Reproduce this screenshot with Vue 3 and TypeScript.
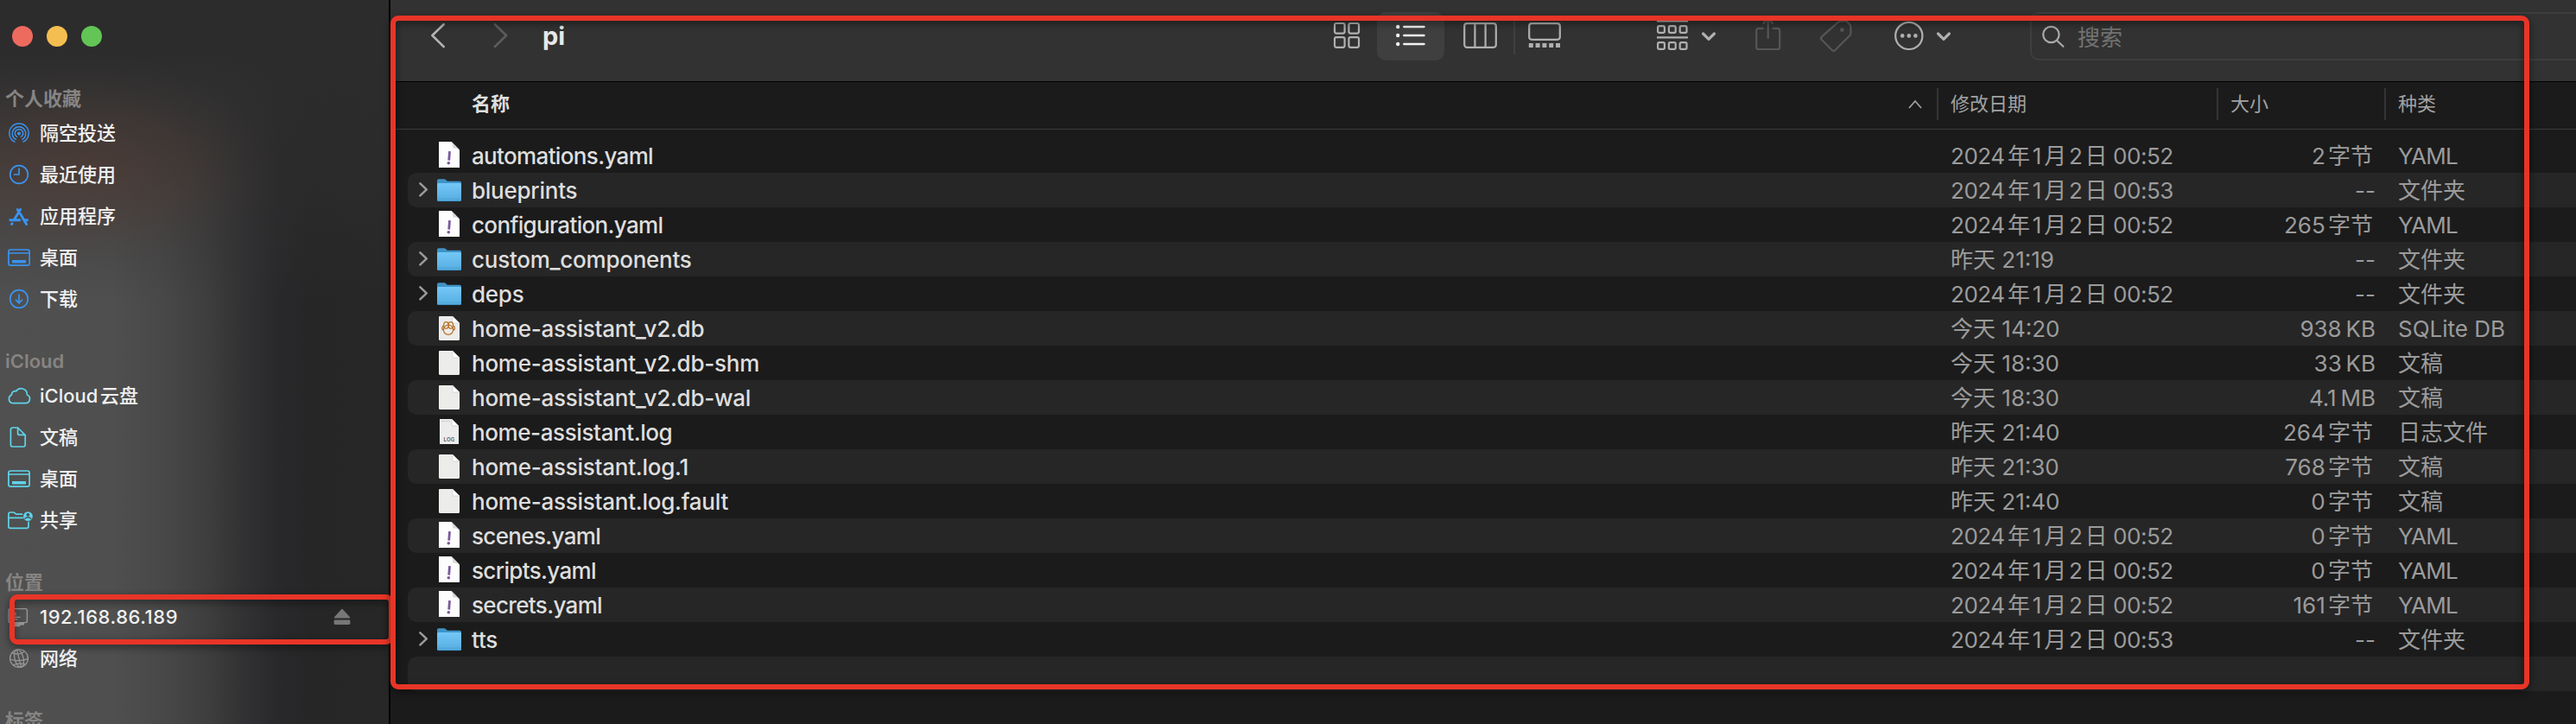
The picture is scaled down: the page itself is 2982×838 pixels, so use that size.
<script setup lang="ts">
type FileIcon = 'yaml' | 'folder' | 'db' | 'doc' | 'log'
type SideIcon = 'airdrop' | 'clock' | 'apps' | 'desktop' | 'download' | 'cloud' | 'document' | 'shared' | 'computer' | 'globe'

interface FileRow {
  name: string
  date: string
  size: string
  kind: string
  icon: FileIcon
}

interface SideItem {
  label: string
  icon: SideIcon
  eject?: boolean
}

interface SideGroup {
  title: string
  tone: 'blue' | 'cyan' | 'gray'
  items: SideItem[]
}

const groups: SideGroup[] = [
  {
    title: '个人收藏',
    tone: 'blue',
    items: [
      { label: '隔空投送', icon: 'airdrop' },
      { label: '最近使用', icon: 'clock' },
      { label: '应用程序', icon: 'apps' },
      { label: '桌面', icon: 'desktop' },
      { label: '下载', icon: 'download' },
    ],
  },
  {
    title: 'iCloud',
    tone: 'cyan',
    items: [
      { label: 'iCloud云盘', icon: 'cloud' },
      { label: '文稿', icon: 'document' },
      { label: '桌面', icon: 'desktop' },
      { label: '共享', icon: 'shared' },
    ],
  },
  {
    title: '位置',
    tone: 'gray',
    items: [
      { label: '192.168.86.189', icon: 'computer', eject: true },
      { label: '网络', icon: 'globe' },
    ],
  },
  { title: '标签', tone: 'gray', items: [] },
]

const files: FileRow[] = [
  { name: 'automations.yaml', date: '2024年1月2日 00:52', size: '2字节', kind: 'YAML', icon: 'yaml' },
  { name: 'blueprints', date: '2024年1月2日 00:53', size: '--', kind: '文件夹', icon: 'folder' },
  { name: 'configuration.yaml', date: '2024年1月2日 00:52', size: '265字节', kind: 'YAML', icon: 'yaml' },
  { name: 'custom_components', date: '昨天 21:19', size: '--', kind: '文件夹', icon: 'folder' },
  { name: 'deps', date: '2024年1月2日 00:52', size: '--', kind: '文件夹', icon: 'folder' },
  { name: 'home-assistant_v2.db', date: '今天 14:20', size: '938 KB', kind: 'SQLite DB', icon: 'db' },
  { name: 'home-assistant_v2.db-shm', date: '今天 18:30', size: '33 KB', kind: '文稿', icon: 'doc' },
  { name: 'home-assistant_v2.db-wal', date: '今天 18:30', size: '4.1 MB', kind: '文稿', icon: 'doc' },
  { name: 'home-assistant.log', date: '昨天 21:40', size: '264字节', kind: '日志文件', icon: 'log' },
  { name: 'home-assistant.log.1', date: '昨天 21:30', size: '768字节', kind: '文稿', icon: 'doc' },
  { name: 'home-assistant.log.fault', date: '昨天 21:40', size: '0字节', kind: '文稿', icon: 'doc' },
  { name: 'scenes.yaml', date: '2024年1月2日 00:52', size: '0字节', kind: 'YAML', icon: 'yaml' },
  { name: 'scripts.yaml', date: '2024年1月2日 00:52', size: '0字节', kind: 'YAML', icon: 'yaml' },
  { name: 'secrets.yaml', date: '2024年1月2日 00:52', size: '161字节', kind: 'YAML', icon: 'yaml' },
  { name: 'tts', date: '2024年1月2日 00:53', size: '--', kind: '文件夹', icon: 'folder' },
]
</script>

<template>
  <div class="window">
    <aside class="sidebar">
      <div class="lights">
        <span class="light red"></span>
        <span class="light yellow"></span>
        <span class="light green"></span>
      </div>
      <section v-for="g in groups" :key="g.title" class="group" :class="g.tone">
        <h2>{{ g.title }}</h2>
        <div v-for="item in g.items" :key="item.label" class="side-item">
          <svg class="side-icon" width="34" height="32" viewBox="0 0 34 32" fill="none" stroke="currentColor" stroke-width="1.7" stroke-linecap="round" stroke-linejoin="round">
            <template v-if="item.icon === 'airdrop'">
              <circle cx="17" cy="16.4" r="2" fill="currentColor" stroke="none" />
              <path stroke-width="1.5" d="M14.6 20.4a4.7 4.7 0 1 1 4.8 0M13.2 23.4a7.8 7.8 0 1 1 7.6 0M12 26.2a11.2 11.2 0 1 1 10 0" />
            </template>
            <template v-else-if="item.icon === 'clock'">
              <circle cx="17" cy="16" r="10.3" />
              <path d="M17 9.2V16H11.6" />
            </template>
            <template v-else-if="item.icon === 'apps'">
              <path stroke-width="2.9" d="M18.6 8.6 11.3 20.6M15.3 8.6l1 1.8M18.6 13.6l7 12M6.8 20.8h11M22.8 20.8h3.8M9 24.8l-.5.8" />
            </template>
            <template v-else-if="item.icon === 'desktop'">
              <rect x="4.9" y="7" width="24.2" height="18.2" rx="2.4" />
              <path stroke-width="1.4" d="M5 11h24" />
              <rect x="9" y="19" width="16" height="3.6" rx=".6" fill="currentColor" stroke="none" />
            </template>
            <template v-else-if="item.icon === 'download'">
              <circle cx="17" cy="16" r="10.3" />
              <path d="M17 11v9.6M13.4 17.2l3.6 3.6 3.6-3.6" />
            </template>
            <template v-else-if="item.icon === 'cloud'">
              <path d="M9.6 24.6h14.6a5 5 0 0 0 2.2-9.6 7 7 0 0 0-12.8-4.2 4.2 4.2 0 0 0-5.2 4.3 5 5 0 0 0 1.2 9.5z" />
            </template>
            <template v-else-if="item.icon === 'document'">
              <path d="M9.6 5h6l8.6 8.6v11.2a2.2 2.2 0 0 1-2.2 2.2H9.6a2.2 2.2 0 0 1-2.2-2.2V7.2A2.2 2.2 0 0 1 9.6 5zM15.6 5.2v6.2a2 2 0 0 0 2 2h6.2" />
            </template>
            <template v-else-if="item.icon === 'shared'">
              <path d="M28 18.4v4.8a2.2 2.2 0 0 1-2.2 2.2H7.1a2.2 2.2 0 0 1-2.2-2.2V9.2A2.2 2.2 0 0 1 7.1 7h3.4c1.8 0 2 2.2 4 2.2h6M5 13.4h16.5" />
              <circle cx="27.4" cy="11.6" r="5.4" fill="currentColor" stroke="none" />
              <circle cx="27.4" cy="9.8" r="1.9" fill="#4f4f4f" stroke="none" />
              <path d="M23.9 14.3c1.4-2 5.6-2 7 0" stroke="#4f4f4f" stroke-width="1.4" />
            </template>
            <template v-else-if="item.icon === 'computer'">
              <rect x="5" y="6.6" width="21.4" height="16" rx="1.8" stroke-width="1.4" />
              <path stroke-width="1.2" d="M13 11v3M12 16.4h6M12 18.8h3" />
              <path d="M9 22.4h14v3.2h-4.4l-.6 1.6H9z" fill="currentColor" stroke="none" />
            </template>
            <template v-else>
              <g stroke-width="1.3">
                <circle cx="17" cy="16" r="10.4" />
                <ellipse cx="17" cy="16" rx="5" ry="10.4" transform="rotate(-14 17 16)" />
                <path d="M14.4 6 19.6 26M6.8 17c5 2.4 14 2.4 20.2-.6M9 9.6c5 2.4 9.8 2 14-1.4M10.4 23.6c4-1.8 10.2-2 14-.8" />
              </g>
            </template>
          </svg>
          <span class="side-label" :class="{ host: item.eject }">{{ item.label }}</span>
          <svg v-if="item.eject" class="eject" width="20" height="20" viewBox="0 0 20 20">
            <path d="M10 .8a1 1 0 0 1 .8.4l8.2 9c.5.6.2 1.4-.6 1.4H1.6c-.8 0-1.1-.8-.6-1.4l8.2-9a1 1 0 0 1 .8-.4z" />
            <rect x=".6" y="13.6" width="18.8" height="5.4" rx="1.4" />
          </svg>
        </div>
      </section>
    </aside>

    <main class="content">
      <header class="toolbar">
        <svg class="back" width="18" height="40" viewBox="0 0 18 40"><path d="M15.6 6.2 2.4 19l13.2 13" /></svg>
        <svg class="forward" width="18" height="40" viewBox="0 0 18 40"><path d="M2.9 6.2 16.1 19 2.9 32" /></svg>
        <h1>pi</h1>
        <svg class="tool" width="32" height="40" viewBox="0 0 32 40">
          <rect x="2" y="5" width="11.6" height="11.6" rx="2" />
          <rect x="18.4" y="5" width="11.6" height="11.6" rx="2" />
          <rect x="2" y="21.2" width="11.6" height="11.6" rx="2" />
          <rect x="18.4" y="21.2" width="11.6" height="11.6" rx="2" />
        </svg>
        <div class="segment">
          <svg width="36" height="40" viewBox="0 0 36 40">
            <g fill="#f2f2f2">
              <circle cx="3.2" cy="9" r="2.2" />
              <circle cx="3.2" cy="19" r="2.2" />
              <circle cx="3.2" cy="29" r="2.2" />
            </g>
            <path d="M10.4 9h23M10.4 19h23M10.4 29h23" stroke="#f2f2f2" stroke-width="2.6" stroke-linecap="round" />
          </svg>
        </div>
        <svg class="tool columns" width="40" height="40" viewBox="0 0 40 40">
          <rect x="1.2" y="5.2" width="36.6" height="27.6" rx="3" />
          <path d="M13.4 5v28M25.6 5v28" />
        </svg>
        <span class="sep"></span>
        <svg class="tool gallery" width="40" height="40" viewBox="0 0 40 40">
          <rect x="2.2" y="5.2" width="35.6" height="18.6" rx="3" />
          <path d="M1.8 30.4h36.6" stroke-width="5" stroke-dasharray="5 2.8" />
        </svg>
        <svg class="tool group-by" width="38" height="40" viewBox="0 0 38 40">
          <path d="M1 2.4h36M1 21.3h36" stroke-width="2.2" />
          <rect x="2.1" y="8.1" width="7.8" height="7.8" rx="1.6" />
          <rect x="14.9" y="8.1" width="7.8" height="7.8" rx="1.6" />
          <rect x="27.7" y="8.1" width="7.8" height="7.8" rx="1.6" />
          <rect x="2.1" y="27.1" width="7.8" height="7.8" rx="1.6" />
          <rect x="14.9" y="27.1" width="7.8" height="7.8" rx="1.6" />
          <rect x="27.7" y="27.1" width="7.8" height="7.8" rx="1.6" />
        </svg>
        <svg class="tool drop" width="18" height="40" viewBox="0 0 18 40"><path d="M2.6 17 9 23.4 15.4 17" /></svg>
        <svg class="tool dim share" width="32" height="40" viewBox="0 0 32 40">
          <path d="M10 10.8H4.8a2.6 2.6 0 0 0-2.6 2.6v19a2.6 2.6 0 0 0 2.6 2.6h21.8a2.6 2.6 0 0 0 2.6-2.6v-19a2.6 2.6 0 0 0-2.6-2.6h-5M15.7 22V-1M10.4 5l5.3-6 5.3 6" />
        </svg>
        <svg class="tool dim tag" width="40" height="40" viewBox="0 0 40 40">
          <path d="M22.4 4.2 3.8 20.6c-1 1-1 2.2-.2 3.2L16 36.2c1 1 2.2 1 3.2 0L36.4 19c.7-.7 1-1.4 1-2.4V8.8c0-1-.3-1.8-1-2.4l-3-3c-.6-.6-1.4-1-2.4-1h-4.8c-1.6 0-2.4.6-3.8 1.8z" />
          <circle cx="27.4" cy="12.6" r="2.3" fill="currentColor" stroke="none" />
        </svg>
        <svg class="tool more" width="36" height="40" viewBox="0 0 36 40">
          <circle cx="17.8" cy="19.4" r="15.6" />
          <g fill="currentColor" stroke="none">
            <circle cx="10.2" cy="19.4" r="2.3" />
            <circle cx="17.8" cy="19.4" r="2.3" />
            <circle cx="25.4" cy="19.4" r="2.3" />
          </g>
        </svg>
        <svg class="tool drop second" width="18" height="40" viewBox="0 0 18 40"><path d="M2.6 17 9 23.4 15.4 17" /></svg>
        <div class="search">
          <svg width="28" height="40" viewBox="0 0 28 40">
            <circle cx="11.4" cy="18" r="9.2" />
            <path d="M18.2 25 25.4 31.8" />
          </svg>
          <span>搜索</span>
        </div>
      </header>

      <div class="head">
        <span class="col name">名称</span>
        <svg class="sort" width="16" height="12" viewBox="0 0 16 12"><path d="M1 10 8 2l7 8" /></svg>
        <span class="col date">修改日期</span>
        <span class="col size">大小</span>
        <span class="col kind">种类</span>
      </div>

      <div class="rows">
        <div v-for="f in files" :key="f.name" class="row" :class="f.icon">
          <svg class="toggle" width="34" height="40" viewBox="0 0 34 40">
            <path v-if="f.icon === 'folder'" d="M14.4 12.4 21.8 19.4l-7.4 7" />
          </svg>
          <svg width="28" height="40" viewBox="0 0 28 40">
            <template v-if="f.icon === 'folder'">
              <path d="M0 9.2C0 7.9.8 7.2 2 7.2h6.4c1.6 0 2.6 2.6 4.2 2.6H26c1.3 0 2 .7 2 2V16H0z" fill="#3f93c6" />
              <rect y="12" width="28" height="21" rx="1.4" fill="url(#folderFill)" />
              <path d="M0 30.2h28" stroke="#4a9fd2" stroke-width=".8" />
              <path d="M.6 32.6h26.8" stroke="#3d8fc4" stroke-width=".9" />
            </template>
            <template v-else-if="f.icon === 'yaml'">
              <path d="M2 4h14.6L26 13.4V34H2z" fill="#fdfdfd" />
              <path d="M16.6 4c1.6 4 2 6 1.6 7.6 2.6-.4 5 .2 7.8 1.8z" fill="#d6d6d6" />
              <path d="M14.5 15.2 13.7 25.6" stroke="#7b5a9c" stroke-width="2.8" />
              <circle cx="13.3" cy="28.8" r="1.8" fill="#7b5a9c" />
            </template>
            <template v-else-if="f.icon === 'log'">
              <path d="M3 5h14l8 8v21H3z" fill="#ececec" />
              <path d="M5 7.6h10" stroke="#c4c4c4" stroke-width=".8" />
              <path d="M17 5v6.6c0 .8.4 1.4 1.4 1.4H25z" fill="#fff" stroke="#c0c0c0" stroke-width=".7" />
              <text x="14" y="30.8" text-anchor="middle" class="log-text">LOG</text>
            </template>
            <template v-else>
              <path d="M3.2 6h14.6L26 14v18.8c0 .7-.5 1.2-1.2 1.2H3.2c-.7 0-1.2-.5-1.2-1.2V7.2C2 6.5 2.5 6 3.2 6z" fill="#ececea" />
              <path d="M17.8 6v6.8c0 .8.4 1.2 1.2 1.2h7z" fill="#fff" stroke="#c4c4c4" stroke-width=".6" />
              <g v-if="f.icon === 'db'" fill="none" stroke="#b8752c" stroke-width="1.3">
                <circle cx="13" cy="21.8" r="5.6" />
                <ellipse cx="10.4" cy="16.4" rx="2.7" ry="3.8" />
                <ellipse cx="15.8" cy="16.4" rx="2.7" ry="3.8" />
                <path d="M7.8 17.2c-2.6.2-2.8 4.2-.4 5M18.4 17.2c2.6.2 2.8 4.2.4 5" />
              </g>
            </template>
          </svg>
          <span class="fname">{{ f.name }}</span>
          <span class="fdate" :class="{ full: f.date.startsWith('2') }">{{ f.date }}</span>
          <span class="fsize" :class="{ bytes: f.size.endsWith('节') }">{{ f.size }}</span>
          <span class="fkind">{{ f.kind }}</span>
        </div>
        <div class="row"></div>
      </div>
    </main>

    <div class="mark mark-host"></div>
    <div class="mark mark-list"></div>

    <svg class="defs" width="0" height="0">
      <defs>
        <linearGradient id="folderFill" x1="0" y1="0" x2="0" y2="1">
          <stop offset="0" stop-color="#74c8f8" />
          <stop offset="1" stop-color="#55acdf" />
        </linearGradient>
      </defs>
    </svg>
  </div>
</template>

<style>
body {
  margin: 0;
  background: #1b1b1b;
}
</style>

<style scoped>
.window {
  position: relative;
  display: flex;
  width: 2982px;
  height: 838px;
  overflow: hidden;
  background: #1b1b1b;
  font-family: Inter, "Noto Sans CJK SC", sans-serif;
  text-autospace: normal;
}
svg {
  display: block;
  flex: none;
  overflow: visible;
}
.defs {
  position: absolute;
}

/* Sidebar */
.sidebar {
  flex: none;
  box-sizing: border-box;
  width: 452px;
  height: 838px;
  overflow: hidden;
  border-right: 2px solid #000;
  background:
    radial-gradient(ellipse 220px 115px at 100px 195px, rgba(84, 56, 46, 0.5), rgba(84, 56, 46, 0.3) 40%, rgba(84, 56, 46, 0.08) 75%, rgba(84, 56, 46, 0) 100%),
    linear-gradient(180deg, #2c2c2c 0, #2d2c2c 60px, rgba(46, 45, 45, 0.8) 120px, rgba(50, 48, 48, 0.4) 220px, rgba(50, 50, 50, 0) 350px),
    linear-gradient(90deg, #505050 0, #4f4f4f 130px, #484848 190px, #3e3e3e 240px, #323234 280px, #29292b 320px, #262627 360px, #272727 450px);
}
.lights {
  display: flex;
  gap: 16px;
  height: 68px;
  padding: 30px 0 0 14px;
}
.light {
  width: 24px;
  height: 24px;
  border-radius: 50%;
}
.red { background: #ed6a5f; }
.yellow { background: #f5be50; }
.green { background: #62c555; }
.group {
  margin-bottom: 32px;
}
h2 {
  height: 32px;
  margin: 0;
  padding-left: 6px;
  color: #868483;
  font-size: 22px;
  font-weight: 600;
  line-height: 32px;
}
.side-item {
  display: flex;
  align-items: center;
  height: 48px;
  padding-left: 5px;
}
.blue .side-icon { color: #3a93ee; }
.cyan .side-icon { color: #5fd3ea; }
.gray .side-icon { color: #979797; }
.side-label {
  margin-left: 7px;
  color: #f0f0f0;
  font-size: 22px;
  font-weight: 500;
  line-height: 32px;
  white-space: nowrap;
}
.host {
  letter-spacing: 0.55px;
}
.eject {
  margin-left: auto;
  margin-right: 44px;
  fill: #777;
}

/* Toolbar */
.content {
  flex: 1;
  min-width: 0;
}
.toolbar {
  display: flex;
  align-items: center;
  box-sizing: border-box;
  height: 95px;
  padding-bottom: 10px;
  border-bottom: 1px solid #000;
  background: #323232;
}
.toolbar svg {
  fill: none;
  stroke-linecap: round;
  stroke-linejoin: round;
}
.back {
  margin-left: 46px;
  stroke: #b4b4b4;
  stroke-width: 2.6;
}
.forward {
  margin-left: 54px;
  stroke: #5c5c5c;
  stroke-width: 2.6;
}
h1 {
  width: 915px;
  margin: 0 0 0 40px;
  color: #e8e8e8;
  font-size: 29px;
  font-weight: 700;
  line-height: 40px;
}
.tool {
  color: #b0b0b0;
  stroke: currentColor;
  stroke-width: 2.2;
}
.toolbar .gallery,
.toolbar .group-by {
  stroke-linecap: butt;
}
.dim { color: #565656; }
.segment {
  display: flex;
  align-items: center;
  width: 57px;
  height: 56px;
  margin-left: 19px;
  padding-left: 21px;
  border-radius: 10px;
  background: #3f3f3f;
}
.columns { margin-left: 22px; }
.sep {
  width: 2px;
  height: 42px;
  margin-left: 18px;
  background: #404040;
}
.gallery { margin-left: 14px; }
.group-by { margin-left: 109px; }
.drop {
  margin-left: 14px;
  stroke-width: 3.2;
}
.share { margin-left: 44px; }
.tag { margin-left: 42px; }
.more { margin-left: 47px; }
.second { margin-left: 13px; }
.search {
  display: flex;
  flex: 1;
  align-items: center;
  box-sizing: border-box;
  height: 56px;
  margin-left: 91px;
  padding-left: 11px;
  border: 2px solid #3e3e3e;
  border-right: 0;
  border-radius: 10px 0 0 10px;
  color: #727272;
  font-size: 26px;
}
.search svg {
  stroke: #aaa;
  stroke-width: 2.2;
}
.search span {
  margin: 4px 0 0 14px;
  line-height: 36px;
}

/* List header */
.head {
  display: grid;
  grid-template-columns: 1753px 37px 324px 194px 1fr;
  align-items: center;
  box-sizing: border-box;
  height: 55px;
  padding-bottom: 3px;
  border-bottom: 1px solid #3c3c3c;
  color: #a2a2a2;
  font-size: 22px;
  line-height: 37px;
}
.col {
  height: 37px;
}
.name {
  padding-left: 94px;
  color: #dedede;
  font-weight: 700;
}
.date,
.size,
.kind {
  padding-left: 14px;
  border-left: 2px solid #343434;
}
.sort {
  margin-left: 4px;
  fill: none;
  stroke: #a2a2a2;
  stroke-width: 1.8;
}

/* File rows */
.rows {
  padding-top: 10px;
}
.row {
  display: grid;
  grid-template-columns: 34px 40px 1712px 308px 184px 1fr;
  height: 40px;
  margin-left: 20px;
  border-radius: 10px 0 0 10px;
  color: #9b9b9b;
  font-size: 26px;
  line-height: 42px;
  white-space: nowrap;
}
.row:nth-child(even) {
  background: #262626;
}
.toggle {
  fill: none;
  stroke: #9a9a9a;
  stroke-width: 2.6;
  stroke-linecap: round;
  stroke-linejoin: round;
}
.fname {
  color: #dedede;
  font-weight: 450;
  letter-spacing: -0.25px;
}
.yaml .fname {
  letter-spacing: -0.65px;
}
.log .fname {
  letter-spacing: -0.4px;
}
.full {
  letter-spacing: -0.45px;
}
.fsize {
  text-align: right;
  word-spacing: -2.5px;
}
.bytes {
  padding-right: 3px;
}
.fkind {
  padding-left: 26px;
}
.yaml .fkind {
  letter-spacing: -0.7px;
}
.log-text {
  fill: #555;
  font-size: 6px;
  font-weight: 600;
  letter-spacing: 0.3px;
}

/* Highlight frames */
.mark {
  position: absolute;
  box-sizing: border-box;
  border: 6px solid #e73527;
  border-radius: 9px;
  filter: drop-shadow(0 3px 4px rgba(0, 0, 0, 0.5));
}
.mark-list {
  left: 452px;
  top: 18px;
  width: 2476px;
  height: 780px;
}
.mark-host {
  left: 11px;
  top: 688px;
  width: 445px;
  height: 58px;
}
</style>
